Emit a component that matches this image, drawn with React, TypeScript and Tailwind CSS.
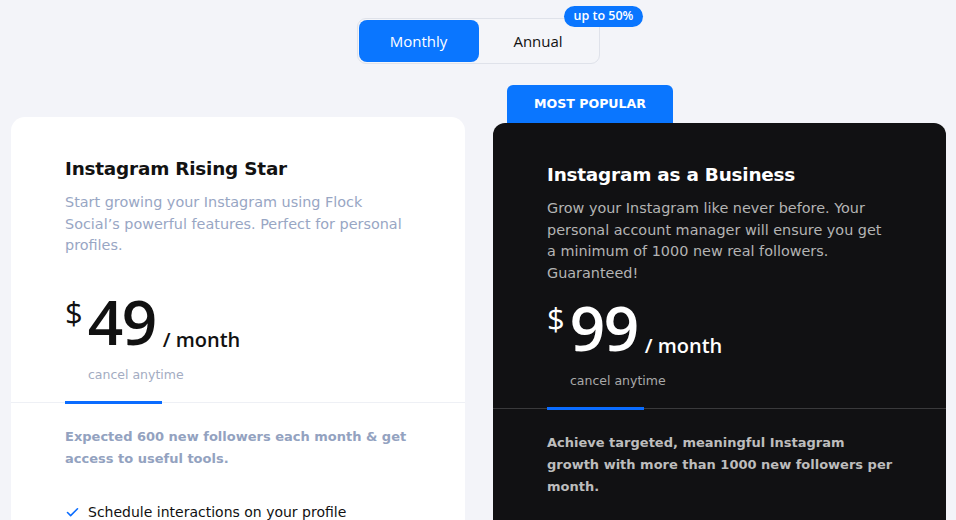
import { Check } from "lucide-react";

const body = { fontFamily: '"DejaVu Sans", "Noto Sans", sans-serif' };
const ui = { fontFamily: '"Open Sans", "Noto Sans", sans-serif' };

type Plan = {
  title: string;
  desc: string;
  price: string;
  summary: string;
  dark?: boolean;
};

const plans: Plan[] = [
  {
    title: "Instagram Rising Star",
    desc: "Start growing your Instagram using Flock Social’s powerful features. Perfect for personal profiles.",
    price: "49",
    summary: "Expected 600 new followers each month & get access to useful tools.",
  },
  {
    title: "Instagram as a Business",
    desc: "Grow your Instagram like never before. Your personal account manager will ensure you get a minimum of 1000 new real followers. Guaranteed!",
    price: "99",
    summary: "Achieve targeted, meaningful Instagram growth with more than 1000 new followers per month.",
    dark: true,
  },
];

function PlanCard({ plan }: { plan: Plan }) {
  const dark = plan.dark;
  return (
    <div className={`pt-[38px] pb-10 ${dark ? "bg-[#111113] rounded-[12px]" : "bg-white rounded-[14px]"}`}>
      <div className="pl-[54px] pr-[60px]">
        <h2
          className={`text-[18.4px] font-bold leading-[28px] tracking-[-0.2px] ${dark ? "text-white" : "text-[#121212]"}`}
          style={body}
        >
          {plan.title}
        </h2>
        <p
          className={`mt-[9px] h-[92px] text-[14.4px] leading-[21.5px] ${dark ? "text-[#b4b4b4]" : "text-[#98a6c4]"}`}
          style={body}
        >
          {plan.desc}
        </p>
        <div className={`mt-[12px] flex items-end ${dark ? "text-white" : "text-[#111]"}`} style={ui}>
          <span className="self-start mt-[1px] text-[31px] leading-none">$</span>
          <span className="ml-[5px] text-[62px] font-semibold leading-[50px] tracking-[-1.5px]">{plan.price}</span>
          <span className="ml-[7px] mb-[-4px] text-[20px] font-semibold leading-none">/ month</span>
        </div>
        <p
          className={`mt-[20px] pl-[23px] text-[12.5px] ${dark ? "text-[#a9a9a9]" : "text-[#a3acc2]"}`}
          style={body}
        >
          cancel anytime
        </p>
      </div>
      <div className={`mt-[17px] h-px ${dark ? "bg-[#3a3a3c]" : "bg-[#eef0f5]"}`}>
        <div className="ml-[54px] w-[97px] h-[3px] -translate-y-px bg-[#0a6cff]" />
      </div>
      <div className="pl-[54px] pr-[48px]">
        <p
          className={`mt-[23px] text-[13px] font-bold leading-[22px] ${dark ? "text-[#bdbdbd]" : "text-[#93a2c0]"}`}
          style={body}
        >
          {plan.summary}
        </p>
        {!dark && (
          <div className="mt-[32px] flex items-center gap-[8px] text-[14px] text-[#111]" style={body}>
            <Check className="w-[15px] h-[15px] text-[#0a6cff]" strokeWidth={2.5} />
            <span>Schedule interactions on your profile</span>
          </div>
        )}
      </div>
    </div>
  );
}

export default function App() {
  return (
    <div className="w-[956px] h-[520px] overflow-hidden bg-[#f3f4f9]">
      <div className="flex justify-center pt-[18px]">
        <div className="relative">
          <div className="flex w-[243px] h-[46px] rounded-[9px] border border-[#dfe2ea] bg-[#f4f5f9] p-px" style={ui}>
            <button className="w-[120px] rounded-[8px] bg-[#0a76ff] text-white text-[15px] font-medium">Monthly</button>
            <button className="flex-1 text-[#111] text-[15px] font-medium">Annual</button>
          </div>
          <span
            className="absolute -top-[12px] left-[207px] rounded-full bg-[#0a76ff] px-[10px] py-px text-[12.5px] font-semibold text-white whitespace-nowrap"
            style={ui}
          >
            up to 50%
          </span>
        </div>
      </div>
      <div className="mt-[21px] grid grid-cols-[454px_453px] gap-[28px] pl-[11px] items-start">
        <div className="mt-[32px]">
          <PlanCard plan={plans[0]} />
        </div>
        <div>
          <div
            className="ml-[14px] w-[166px] h-[38px] rounded-t-[6px] bg-[#0a76ff] flex items-center justify-center text-white text-[12.6px] font-bold uppercase"
            style={body}
          >
            Most Popular
          </div>
          <PlanCard plan={plans[1]} />
        </div>
      </div>
    </div>
  );
}
